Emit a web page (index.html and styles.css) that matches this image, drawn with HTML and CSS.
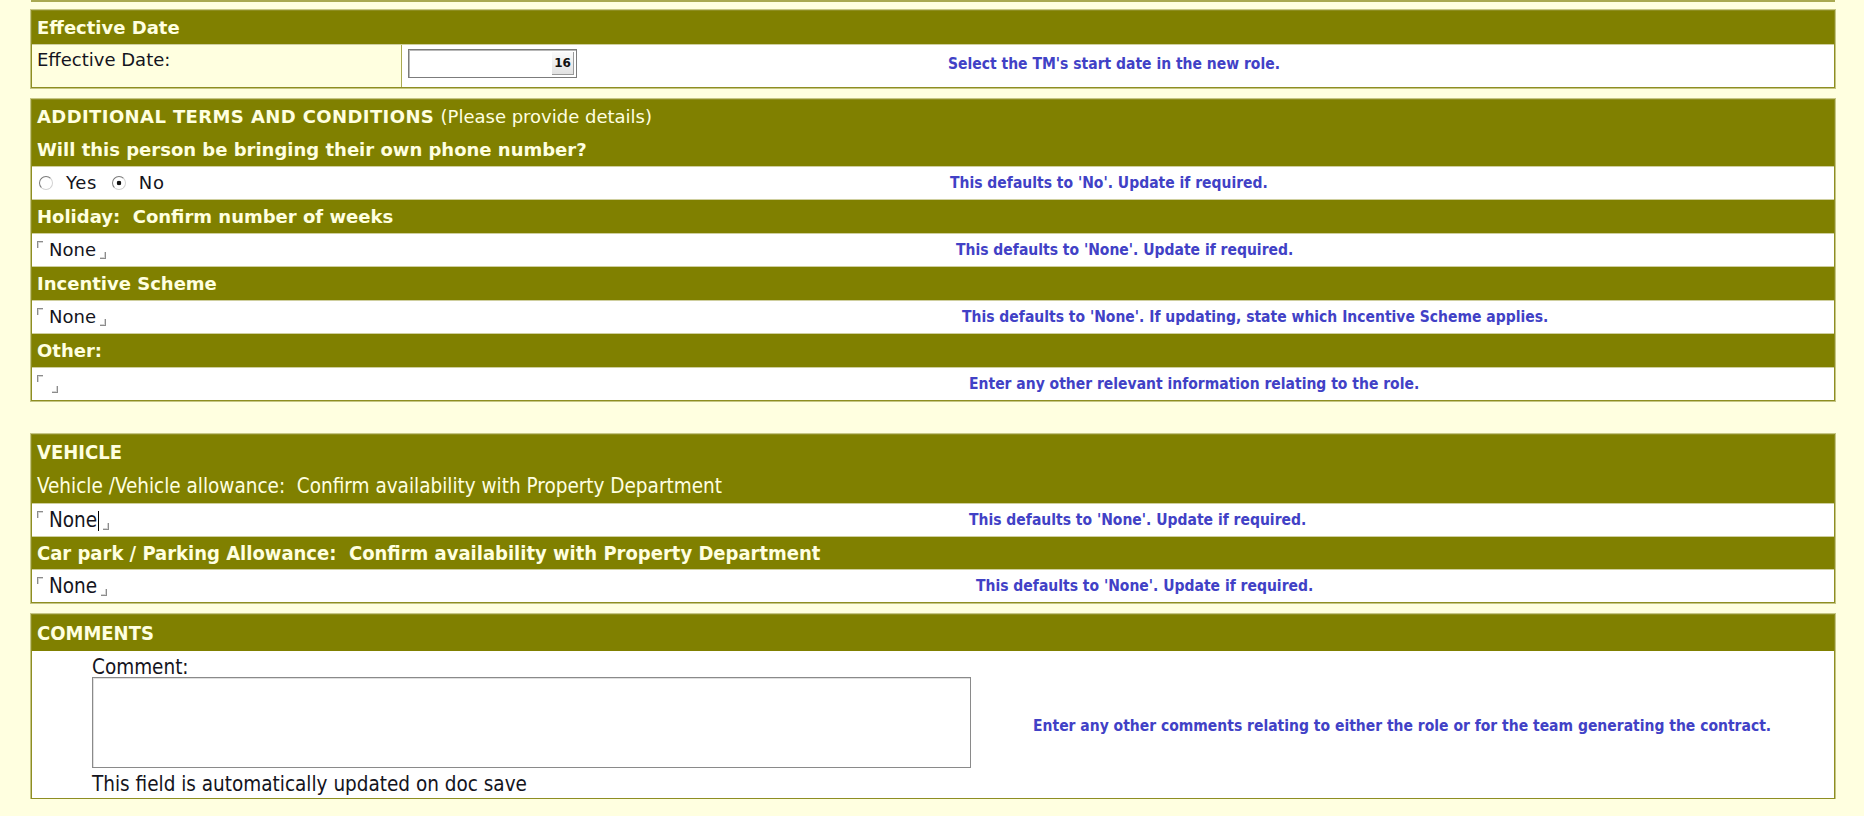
FILE: index.html
```html
<!DOCTYPE html>
<html lang="en">
<head>
    <meta charset="UTF-8">
    <title>Role Change - Terms</title>
    <link rel="stylesheet" href="styles.css">
</head>
<body>
    <div class="cut"></div>

    <div class="box">
        <div class="head">Effective Date</div>
        <div class="date-row">
            <div class="label-cell">Effective Date:</div>
            <div class="value-cell">
                <div class="date-wrap">
                    <div class="date-input"><span class="cal-btn">16</span></div>
                </div>
                <div class="help">Select the TM's start date in the new role.</div>
            </div>
        </div>
    </div>

    <div class="box terms">
        <div class="head">
            <div><span class="caps">ADDITIONAL TERMS AND CONDITIONS</span> <span class="normal">(Please provide details)</span></div>
            <div>Will this person be bringing their own phone number?</div>
        </div>
        <div class="row">
            <div class="choices">
                <span class="radio"></span><span class="choice">Yes</span>
                <span class="radio on"></span><span class="choice">No</span>
            </div>
            <div class="help">This defaults to 'No'. Update if required.</div>
        </div>
        <div class="head">Holiday:&nbsp; Confirm number of weeks</div>
        <div class="row">
            <div><span class="mark-open"></span>None<span class="mark-close"></span></div>
            <div class="help nudge-1">This defaults to 'None'. Update if required.</div>
        </div>
        <div class="head">Incentive Scheme</div>
        <div class="row">
            <div><span class="mark-open"></span>None<span class="mark-close"></span></div>
            <div class="help nudge-2">This defaults to 'None'. If updating, state which Incentive Scheme applies.</div>
        </div>
        <div class="head">Other:</div>
        <div class="row">
            <div><span class="mark-open"></span><span class="mark-close empty"></span></div>
            <div class="help nudge-3">Enter any other relevant information relating to the role.</div>
        </div>
    </div>

    <div class="box vehicle narrow">
        <div class="head tall">
            <div>VEHICLE</div>
            <div class="normal">Vehicle /Vehicle allowance:&nbsp; Confirm availability with Property Department</div>
        </div>
        <div class="row">
            <div><span class="mark-open"></span>None<span class="caret"></span><span class="mark-close"></span></div>
            <div class="help nudge-3">This defaults to 'None'. Update if required.</div>
        </div>
        <div class="head">Car park / Parking Allowance:&nbsp; Confirm availability with Property Department</div>
        <div class="row">
            <div><span class="mark-open"></span>None<span class="mark-close"></span></div>
            <div class="help nudge-4">This defaults to 'None'. Update if required.</div>
        </div>
    </div>

    <div class="box comments narrow">
        <div class="head">COMMENTS</div>
        <div class="comment-body">
            <div class="comment-col">
                <div class="comment-label">Comment:</div>
                <div class="comment-box"></div>
                <div class="comment-note">This field is automatically updated on doc save</div>
            </div>
            <div class="help">Enter any other comments relating to either the role or for the team generating the contract.</div>
        </div>
    </div>
</body>
</html>
```

FILE: styles.css
```css
* {
    box-sizing: border-box;
}
body {
    margin: 0;
    padding: 0 29px 0 31px;
    background-color: #ffffe0;
    font-family: "DejaVu Sans", Verdana, sans-serif;
    font-size: 18px;
    color: #141420;
}
.narrow {
    font-family: "DejaVu Sans Condensed", "Liberation Sans Narrow", "DejaVu Sans", sans-serif;
    font-stretch: condensed;
    font-size: 20px;
}
.narrow .normal,
.narrow .row,
.comment-col {
    font-size: 20.5px;
}
.cut {
    height: 0;
    border-bottom: 2px solid #a9a951;
}
.box {
    margin-top: 8px;
    background-color: white;
    border: 1px solid #8e8e22;
    box-shadow: 0 0 0 1px #c6c684;
}
.box.terms {
    margin-top: 11px;
}
.box.vehicle {
    margin-top: 33px;
}
.box.comments {
    margin-top: 11px;
}
.head {
    background-color: #808000;
    color: #ffffe0;
    font-weight: bold;
    line-height: 33px;
    padding: 0 5px;
}
.row + .head {
    border-top: 1px solid #cfcf9f;
}
.head.tall {
    line-height: 34px;
}
.vehicle .head {
    height: 33px;
}
.vehicle .head.tall {
    height: 68px;
}
.comments .head {
    line-height: 36px;
}
.normal {
    font-weight: normal;
}
.caps {
    letter-spacing: 0.4px;
}
.row {
    display: grid;
    grid-template-columns: 913px 1fr;
    height: 33px;
    padding-left: 5px;
    border-top: 1px solid #cfcf9f;
    line-height: 32px;
}

/* effective date row */
.date-row {
    display: flex;
    height: 43px;
    border-top: 1px solid #cfcf9f;
}
.label-cell {
    width: 370px;
    padding: 4px 5px;
    line-height: 22px;
    background-color: #ffffe0;
    border-right: 1px solid #a9a951;
}
.value-cell {
    flex: 1;
    display: flex;
    align-items: flex-start;
    padding: 4px 0 0 6px;
}
.date-wrap {
    width: 540px;
}
.date-input {
    width: 169px;
    height: 29px;
    display: flex;
    justify-content: flex-end;
    align-items: center;
    padding-right: 2px;
    background-color: white;
    border: 1px solid #7c7c7c;
    box-shadow: inset 1px 1px 0 #b8b8b8;
}
.cal-btn {
    width: 22px;
    height: 23px;
    font-size: 12px;
    font-weight: bold;
    line-height: 23px;
    text-align: center;
    color: #111;
    background: linear-gradient(#fbfbfb, #e2e2e2);
    border-right: 1px solid #9a9a9a;
    border-bottom: 1px solid #9a9a9a;
}
.value-cell .help {
    margin-top: 4px;
    line-height: 22px;
}

/* helper text on the right */
.help {
    font-family: "DejaVu Sans Condensed", "Liberation Sans Narrow", "DejaVu Sans", sans-serif;
    font-stretch: condensed;
    font-size: 15.5px;
    font-weight: bold;
    color: #4141c6;
}
.nudge-1 { margin-left: 6px; }
.nudge-2 { margin-left: 12px; }
.nudge-3 { margin-left: 19px; }
.nudge-4 { margin-left: 26px; }

/* radio buttons */
.choices {
    display: flex;
    align-items: center;
}
.radio {
    width: 14px;
    height: 14px;
    border-radius: 50%;
    border: 1px solid;
    border-color: #7a7a7a #d2d2d2 #d2d2d2 #7a7a7a;
    background: white;
    margin: 0 13px 0 2px;
}
.radio.on {
    background: radial-gradient(circle, #111 0 2px, white 2.6px);
}
.choice {
    margin-right: 13px;
    letter-spacing: 0.6px;
}

/* notes field delimiters */
.mark-open,
.mark-close {
    display: inline-block;
    width: 6px;
    height: 7px;
}
.mark-open {
    vertical-align: top;
    margin: 7px 6px 0 0;
    border-left: 1px solid #8c8c8c;
    border-top: 1px solid #8c8c8c;
    box-shadow: inset 1px 1px 0 #d4d4d4;
}
.mark-close {
    vertical-align: -3px;
    margin-left: 4px;
    border-right: 1px solid #8c8c8c;
    border-bottom: 1px solid #8c8c8c;
    box-shadow: inset -1px -1px 0 #d4d4d4;
}
.mark-close.empty {
    margin-left: 3px;
}
.caret {
    display: inline-block;
    width: 1px;
    height: 20px;
    margin-left: 1px;
    vertical-align: -4px;
    background-color: #000;
}

/* comments */
.comment-body {
    display: flex;
    align-items: center;
    padding: 6px 0 4px 60px;
}
.comment-col {
    width: 879px;
    margin-right: 62px;
}
.comment-label,
.comment-note {
    line-height: 20px;
}
.comment-box {
    height: 91px;
    border: 1px solid #8a8a8a;
    box-shadow: inset 1px 1px 0 #e0e0e0;
}
.comment-note {
    margin-top: 6px;
}
```
